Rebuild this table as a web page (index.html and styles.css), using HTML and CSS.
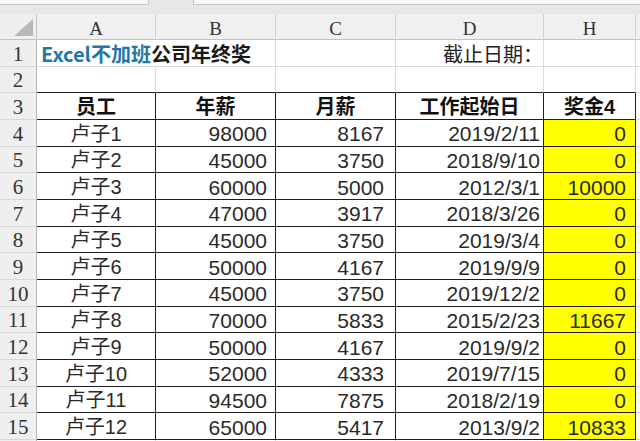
FILE: index.html
```html
<!DOCTYPE html>
<html lang="zh">
<head>
<meta charset="utf-8">
<link rel="stylesheet" href="styles.css">
</head>
<body>
<div class="top"><div class="nb"></div><div class="fx"></div></div>
<div class="sheet">
  <div class="c corner"><div class="tri"></div></div>
  <div class="c ch">A</div><div class="c ch">B</div><div class="c ch">C</div><div class="c ch">D</div><div class="c ch">H</div><div class="c ch"></div>

  <div class="c rh">1</div>
  <div class="c title"><span class="blue">Excel不加班</span><span class="blk">公司年终奖</span></div>
  <div class="c"></div><div class="c"></div>
  <div class="c cut">截止日期：</div>
  <div class="c"></div><div class="c"></div>

  <div class="c rh">2</div>
  <div class="c tb"></div><div class="c tb"></div><div class="c tb"></div><div class="c tb"></div><div class="c tb"></div><div class="c"></div>

  <div class="c rh">3</div>
  <div class="c t m b">员工</div><div class="c t m b">年薪</div><div class="c t m b">月薪</div><div class="c t m b">工作起始日</div><div class="c t m b">奖金4</div><div class="c"></div>

  <div class="c rh">4</div>
  <div class="c t m">卢子1</div><div class="c t r pb">98000</div><div class="c t r pc">8167</div><div class="c t r pd">2019/2/11</div><div class="c t r y">0</div><div class="c"></div>

  <div class="c rh">5</div>
  <div class="c t m">卢子2</div><div class="c t r pb">45000</div><div class="c t r pc">3750</div><div class="c t r pd">2018/9/10</div><div class="c t r y">0</div><div class="c"></div>

  <div class="c rh">6</div>
  <div class="c t m">卢子3</div><div class="c t r pb">60000</div><div class="c t r pc">5000</div><div class="c t r pd">2012/3/1</div><div class="c t r y">10000</div><div class="c"></div>

  <div class="c rh">7</div>
  <div class="c t m">卢子4</div><div class="c t r pb">47000</div><div class="c t r pc">3917</div><div class="c t r pd">2018/3/26</div><div class="c t r y">0</div><div class="c"></div>

  <div class="c rh">8</div>
  <div class="c t m">卢子5</div><div class="c t r pb">45000</div><div class="c t r pc">3750</div><div class="c t r pd">2019/3/4</div><div class="c t r y">0</div><div class="c"></div>

  <div class="c rh">9</div>
  <div class="c t m">卢子6</div><div class="c t r pb">50000</div><div class="c t r pc">4167</div><div class="c t r pd">2019/9/9</div><div class="c t r y">0</div><div class="c"></div>

  <div class="c rh">10</div>
  <div class="c t m">卢子7</div><div class="c t r pb">45000</div><div class="c t r pc">3750</div><div class="c t r pd">2019/12/2</div><div class="c t r y">0</div><div class="c"></div>

  <div class="c rh">11</div>
  <div class="c t m">卢子8</div><div class="c t r pb">70000</div><div class="c t r pc">5833</div><div class="c t r pd">2015/2/23</div><div class="c t r y">11667</div><div class="c"></div>

  <div class="c rh">12</div>
  <div class="c t m">卢子9</div><div class="c t r pb">50000</div><div class="c t r pc">4167</div><div class="c t r pd">2019/9/2</div><div class="c t r y">0</div><div class="c"></div>

  <div class="c rh">13</div>
  <div class="c t m">卢子10</div><div class="c t r pb">52000</div><div class="c t r pc">4333</div><div class="c t r pd">2019/7/15</div><div class="c t r y">0</div><div class="c"></div>

  <div class="c rh">14</div>
  <div class="c t m">卢子11</div><div class="c t r pb">94500</div><div class="c t r pc">7875</div><div class="c t r pd">2018/2/19</div><div class="c t r y">0</div><div class="c"></div>

  <div class="c rh">15</div>
  <div class="c t m">卢子12</div><div class="c t r pb">65000</div><div class="c t r pc">5417</div><div class="c t r pd">2013/9/2</div><div class="c t r y">10833</div><div class="c"></div>

  <div class="c rh"></div>
  <div class="c"></div><div class="c"></div><div class="c"></div><div class="c"></div><div class="c"></div><div class="c"></div>
</div>
</body>
</html>
```
FILE: styles.css
```css
html, body {
  margin: 0;
  padding: 0;
}
body {
  width: 640px;
  height: 441px;
  overflow: hidden;
  background: #fff;
  font-family: "Liberation Sans", "Noto Sans CJK SC", sans-serif;
}
.top {
  height: 14px;
  background: #e7e7e7;
  display: flex;
  align-items: flex-start;
}
.top .nb {
  width: 148px;
  height: 4px;
  background: #f7f7f7;
  border-bottom: 1px solid #c6c6c6;
  border-right: 1px solid #c6c6c6;
}
.top .fx {
  margin-left: 44px;
  flex: 1;
  height: 4px;
  background: #f7f7f7;
  border-bottom: 1px solid #c6c6c6;
  border-left: 1px solid #c6c6c6;
}
.sheet {
  display: grid;
  grid-template-columns: 37px 119px 120px 120px 148px 92px 1fr;
  grid-template-rows: 26px repeat(15, 26.6667px) 1fr;
  height: 427px;
}
.c {
  box-sizing: border-box;
  border-right: 1px solid #dadada;
  border-bottom: 1px solid #dadada;
  display: flex;
  align-items: center;
  padding: 2px 8px 0 8px;
  font-size: 20px;
  line-height: 1;
  color: #2a2a2a;
  white-space: nowrap;
  min-width: 0;
}
.corner {
  background: #efefef;
  justify-content: flex-end;
  align-items: flex-end;
  padding: 0 3px 3px 0;
  border-right-color: #c4c4c4;
  border-bottom-color: #c4c4c4;
}
.tri {
  width: 19px;
  height: 17px;
  background: #b7b7b7;
  clip-path: polygon(100% 0, 100% 100%, 0 100%);
}
.ch {
  background: #f0f0f0;
  font-family: "Liberation Serif", serif;
  font-size: 19px;
  color: #333;
  justify-content: center;
  border-bottom-color: #c2c2c2;
  border-right-color: #d2d2d2;
  padding: 3px 0 0;
}
.rh {
  background: #efefef;
  font-family: "Liberation Serif", serif;
  font-size: 21px;
  color: #333;
  justify-content: center;
  border-right-color: #b4b4b4;
  border-bottom-color: #d8d8d8;
  padding: 3px 0 0;
}
.title {
  overflow: visible;
  border-right-color: transparent;
  padding-left: 4px;
  font-family: "Noto Sans CJK SC", sans-serif;
  font-weight: bold;
  position: relative;
  z-index: 1;
}
.blue { color: #1f78a9; }
.blk { color: #1a1a1a; }
.cut {
  justify-content: flex-end;
  font-family: "Noto Sans CJK SC", sans-serif;
  padding-right: 0;
  color: #222;
}
.r {
  justify-content: flex-end;
  font-size: 21px;
}
.m { justify-content: center; }
.b { font-weight: bold; color: #111; }
.t {
  border-right-color: #1e1e1e;
  border-bottom-color: #1e1e1e;
}
.tb { border-bottom-color: #1e1e1e; }
.y { background: #ffff00; padding-right: 9px; }
.pb { padding-right: 8px; }
.pc { padding-right: 11px; }
.pd { padding-right: 3px; }
```
